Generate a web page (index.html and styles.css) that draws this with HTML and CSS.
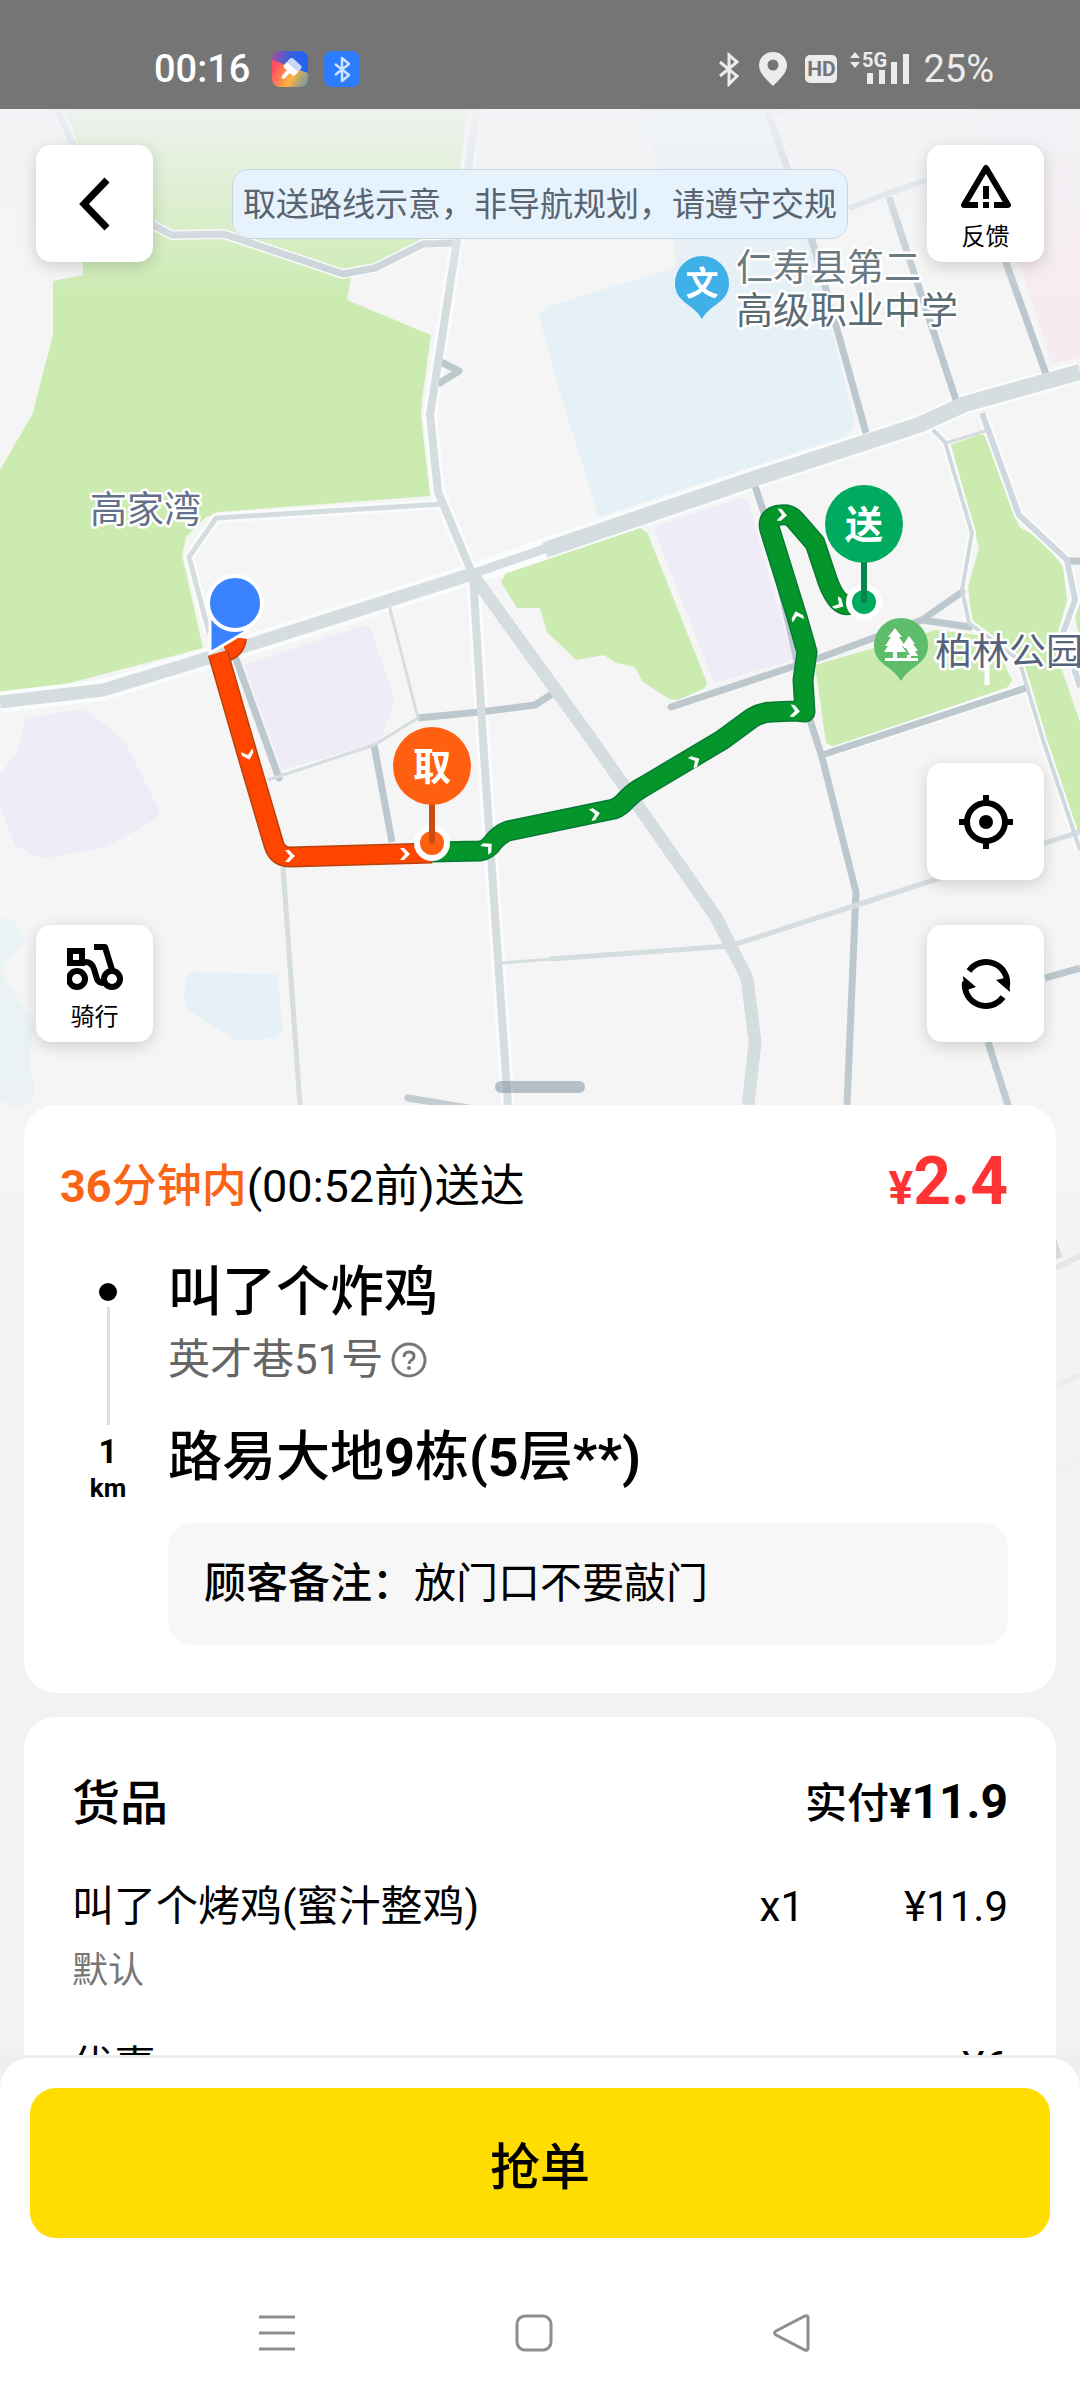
FILE: index.html
```html
<!DOCTYPE html>
<html lang="zh-CN">
<head>
    <meta charset="UTF-8">
    <meta name="viewport" content="width=device-width, initial-scale=1.0">
    <title>抢单</title>
    <link rel="stylesheet" href="styles.css">
</head>
<body>

<div class="screen">

    <header class="status-bar">
        <div class="status-left">
            <span class="status-time">00:16</span>
            <svg class="app-icon" viewBox="0 0 36 36">
                <defs>
                    <linearGradient id="brush-a" x1="0" y1="0.1" x2="1" y2="0.2">
                        <stop offset="0" stop-color="#a0509c"/>
                        <stop offset="0.5" stop-color="#3a5fe0"/>
                        <stop offset="1" stop-color="#2063f2"/>
                    </linearGradient>
                    <linearGradient id="brush-b" x1="0" y1="0.4" x2="0.9" y2="0.8">
                        <stop offset="0" stop-color="#ff4d62"/>
                        <stop offset="0.6" stop-color="#ffb43c"/>
                        <stop offset="1" stop-color="#8b9c90"/>
                    </linearGradient>
                    <clipPath id="brush-clip"><rect width="36" height="36" rx="8"/></clipPath>
                </defs>
                <g clip-path="url(#brush-clip)">
                    <rect width="36" height="36" fill="url(#brush-a)"/>
                    <path d="M0 9 L36 22 V36 H0 Z" fill="url(#brush-b)"/>
                </g>
                <g transform="rotate(42 18 18)">
                    <rect x="11" y="8" width="15" height="8" rx="3" fill="#c9d6fb"/>
                    <path d="M11 15 h15 v4 q0 2 -2 2 h-3.500 v7 q0 2 -2 2 t-2 -2 v-7 H13 q-2 0 -2 -2 Z" fill="#fff"/>
                </g>
            </svg>
            <svg class="app-icon" viewBox="0 0 36 36">
                <rect width="36" height="36" rx="8" fill="#2b7cff"/>
                <path d="M11 13 L25 24 L18 30 V7 L25 13 L11 24" fill="none" stroke="#cfe2ff" stroke-width="2.500" stroke-linejoin="round"/>
            </svg>
        </div>
        <div class="status-right">
            <svg class="status-icon" width="24" height="36" viewBox="0 0 24 36">
                <path d="M3 11 L20 25 L12 33 V4 L20 11 L3 25" fill="none" stroke="#ececec" stroke-width="3"/>
            </svg>
            <svg class="status-icon" width="28" height="36" viewBox="0 0 28 36">
                <path fill="#ececec" fill-rule="evenodd" d="M14 1 C6 1 0 7 0 14.500 C0 22 8 29 14 35 C20 29 28 22 28 14.500 C28 7 22 1 14 1 Z M14 8.500 a5.500 5.500 0 1 1 0 11 a5.500 5.500 0 1 1 0 -11 Z"/>
            </svg>
            <span class="hd-badge">HD</span>
            <svg class="signal" width="62" height="36" viewBox="0 0 62 36">
                <g fill="#ececec">
                    <path d="M1 7 L6 1 L11 7 Z M1 11 H11 L6 17 Z"/>
                    <text class="signal-text" x="13" y="16">5G</text>
                    <rect x="18" y="22" width="6" height="11"/>
                    <rect x="30" y="19" width="6" height="14"/>
                    <rect x="42" y="11" width="6" height="22"/>
                    <rect x="54" y="3" width="6" height="30"/>
                </g>
            </svg>
            <span class="battery">25%</span>
        </div>
    </header>

    <main class="content">

        <svg class="map" viewBox="0 109 1080 1391">
            <defs>
                <linearGradient id="fade-top" x1="0" y1="0" x2="0" y2="1">
                    <stop offset="0" stop-color="#f2f3f6" stop-opacity="0.9"/>
                    <stop offset="1" stop-color="#f2f3f6" stop-opacity="0"/>
                </linearGradient>
                <linearGradient id="fade-bottom" x1="0" y1="0" x2="0" y2="1">
                    <stop offset="0" stop-color="#f2f2f2" stop-opacity="0"/>
                    <stop offset="1" stop-color="#f2f2f2" stop-opacity="1"/>
                </linearGradient>
                <path id="chevron" d="M-5 -6 H-1 L5 0 L-1 6 H-5 L0 0 Z" fill="#fff"/>
            </defs>
            <rect x="0" y="109" width="1080" height="1391" fill="#f5f5f5"/>

            <!-- parks -->
            <g fill="#cbebb0">
                <path d="M66 109 L78 145 L83 275 L53 281 V335 L36 400 L33 413 L0 470 V695 L43 690 L203 648 L182 555 L186 537 L205 518 L218 512 L430 496 L421 415 L422 400 L431 335 L347 300 L351 277 L378 262 L420 240 L452 236 L467 109 Z"/>
                <path d="M506 573 L540 562 L640 528 L647 532 L707 683 L705 688 L678 700 L669 699 L643 682 L635 667 L616 663 L604 655 L576 660 L547 632 L540 608 H517 L501 582 Z"/>
                <path d="M815 665 L936 630 L977 635 L1001 657 L1012 680 L1008 687 L834 747 L826 743 Z"/>
                <path d="M951 445 L977 435 Q985 433 988 440 L1019 527 L1043 540 L1063 567 L1067 600 L1058 633 L1056 653 L1080 722 V840 L1067 807 L1053 760 L1026 687 L1019 665 L994 640 L972 620 L968 587 L979 548 Z"/>
                <path d="M1080 603 L1075 617 L1080 640 Z"/>
            </g>

            <!-- building areas -->
            <g fill="#efecf7">
                <path d="M244 665 L365 625 L370 627 L395 700 L382 737 L380 742 L282 770 Z"/>
                <path d="M26 718 L81 709 L90 713 L124 740 L160 811 L157 818 L107 847 L41 859 L15 846 L0 807 V775 L18 750 Z"/>
                <path d="M654 530 L660 524 L743 497 L748 500 L793 660 L714 683 Z"/>
            </g>
            <g fill="#e5f0f7">
                <path d="M643 109 H760 L809 237 L854 420 Q855 432 840 438 L599 517 L562 400 L540 320 Q538 310 550 306 L676 267 L674 237 Z"/>
                <path d="M193 972 L277 974 L283 1032 L275 1038 L238 1041 L188 1010 L184 1000 L186 977 Z"/>
                <path d="M0 918 L14 920 L26 940 L5 963 L4 978 L34 1023 L29 1065 L35 1090 L32 1102 L17 1109 L0 1100 Z" opacity="0.6"/>
            </g>
            <path d="M975 109 L1019 263 L1050 360 L1055 363 L1080 358 V109 Z" fill="#f6ebf1"/>

            <!-- roads: light outline first, fill second -->
            <g fill="none" stroke="#fbfcfc" stroke-linejoin="round">
                <path d="M477 109 L457 240 L430 415 L438 492 L472 573" stroke-width="14"/>
                <path d="M57 109 L73 145 M153 225 L172 235 L224 234 L343 274 L375 268 L423 244 L455 243" stroke-width="10"/>
                <path d="M0 702 L103 690 L205 659 L472 574 L547 548 L753 479 L919 425 L965 404 L1080 372" stroke-width="21"/>
                <path d="M472 574 L592 740 L716 917 L747 978 L755 1042 L748 1105 M473 575 L483 740 L508 1105" stroke-width="14"/>
                <path d="M442 504 L216 518 L189 557 L209 633 M982 413 L1019 515 L1067 560 L1075 600 L1063 633 L1080 687 M822 755 L1026 688" stroke-width="10"/>
                <path d="M933 430 L945 442 L972 533 L962 590 L969 623 L1019 660 L1043 740 L1080 850" stroke-width="8"/>
            </g>
            <g fill="none" stroke="#bdc8ce" stroke-width="7" stroke-linejoin="round">
                <path d="M441 362 L459 371 L438 384"/>
                <path d="M767 109 L815 250 L866 433 M889 197 L957 403 M1005 260 L1046 374"/>
                <path d="M755 486 L764 513 L810 720 L822 757 L856 892 L847 1105"/>
                <path d="M671 707 L822 657 L922 620 L962 592 M922 620 L970 627 M822 755 L1026 688" stroke-linecap="round"/>
                <path d="M418 718 L480 712 L535 705 L552 694 M374 745 L392 842"/>
                <path d="M236 659 L279 778 M408 1098 L480 1110" stroke-linecap="round"/>
                <path d="M988 1042 L1008 1105 L1059 1258 M1045 978 L1080 968 M1067 561 H1080"/>
            </g>
            <g fill="none" stroke="#d5dde1" stroke-linejoin="round">
                <path d="M57 109 L73 145" stroke="#c5ced6" stroke-width="7"/>
                <path d="M153 225 L172 235 L224 234 L343 274 L375 268 L423 244 L455 243" stroke="#c6d0d6" stroke-width="7"/>
                <path d="M477 109 L457 240 L430 415 L438 492 L472 573" stroke-width="8"/>
                <path d="M0 702 L103 690 L205 659 L472 574" stroke-width="13"/>
                <path d="M472 574 L550 547" stroke-width="9"/>
                <path d="M545 550 L753 479 L919 425 L965 404 L1080 372" stroke-width="16"/>
                <path d="M472 574 L592 740 L716 917 L747 978 L755 1042 L748 1105" stroke-width="13"/>
                <path d="M473 575 L483 740 L508 1105" stroke-width="8"/>
                <path d="M442 504 L216 518 L189 557 L209 633 M283 867 L300 1105" stroke-width="5"/>
                <path d="M389 605 L418 718 L374 745 L268 780 M946 443 L988 430 M502 963 L552 959 M769 117 L795 109" stroke-width="3"/>
                <path d="M550 959 L730 946 L857 905 L940 878 L1045 843 L1080 832" stroke-width="5"/>
                <path d="M849 208 L889 193 L927 180" stroke-width="6"/>
                <path d="M982 413 L1019 515 L1067 560 L1075 600 L1063 633 L1080 687" stroke="#d0d8df" stroke-width="6"/>
                <path d="M933 430 L945 442 L972 533 L962 590 L969 623 L1019 660 L1043 740 L1080 850" stroke="#d0d8df" stroke-width="4"/>
                <path d="M1056 1268 L1080 1256 M1056 1387 L1080 1375 M1056 1472 L1080 1460 M1056 1487 L1080 1540" stroke-width="6"/>
            </g>
            <path d="M987 663 V685" stroke="#fff" stroke-width="5"/>

            <rect x="0" y="109" width="1080" height="190" fill="url(#fade-top)"/>
            <rect x="0" y="1060" width="1080" height="440" fill="url(#fade-bottom)"/>

            <!-- places -->
            <g class="place">
                <text x="90" y="523" fill="#65718c">高家湾</text>
                <text x="736" y="281" fill="#6a7a80">仁寿县第二</text>
                <text x="736" y="324" fill="#5b6b72">高级职业中学</text>
                <text x="935" y="665" fill="#56637a">柏林公园</text>
            </g>
            <path d="M702 256 a27 27 0 0 1 27 27 c0 20 -18 20 -27 36 c-9 -16 -27 -16 -27 -36 a27 27 0 0 1 27 -27 Z" fill="#3fb0e8"/>
            <text class="pin-text" x="702" y="295" font-size="33">文</text>
            <path d="M901 618 a27 27 0 0 1 27 27 c0 20 -18 20 -27 36 c-9 -16 -27 -16 -27 -36 a27 27 0 0 1 27 -27 Z" fill="#5dbd6b"/>
            <path d="M895 628 l7 9 h-3 l6 9 h-3 l4 6 h-9 v6 h-4 v-6 h-9 l4 -6 h-3 l6 -9 h-3 Z M909 636 l6 8 h-2 l5 7 h-3 l3 5 h-7 v3 h-4 v-4 h3 l-4 -7 h-2 l-1 -3 Z M885 658 h33 v3 h-33 Z" fill="#fff"/>

            <!-- route -->
            <g fill="none" stroke-linejoin="round">
                <path d="M237 638 Q236 648 226 652" stroke="#b8420a" stroke-width="20"/>
                <path d="M237 638 Q236 648 226 652" stroke="#ff4500" stroke-width="17"/>
                <path d="M432 852 L480 851 Q488 850 494 841 Q500 834 508 831 L614 809 Q620 807 627 799 Q635 791 643 787 L722 740 L752 718 Q762 712 772 712 L795 711 L805 712 L803 680 L807 652 L797 617 L770 530 Q766 516 781 515 Q790 514 795 520 L815 543 L828 582 Q838 608 850 604 L864 600" stroke="#067a35" stroke-width="21"/>
                <path d="M432 852 L480 851 Q488 850 494 841 Q500 834 508 831 L614 809 Q620 807 627 799 Q635 791 643 787 L722 740 L752 718 Q762 712 772 712 L795 711 L805 712 L803 680 L807 652 L797 617 L770 530 Q766 516 781 515 Q790 514 795 520 L815 543 L828 582 Q838 608 850 604 L864 600" stroke="#04962a" stroke-width="18"/>
                <path d="M218 653 L249 760 L274 845 Q278 857 290 857 L432 853" stroke="#b8420a" stroke-width="21"/>
                <path d="M218 653 L249 760 L274 845 Q278 857 290 857 L432 853" stroke="#ff4500" stroke-width="18"/>
            </g>
            <use href="#chevron" transform="translate(248 755) rotate(73)"/>
            <use href="#chevron" transform="translate(290 856)"/>
            <use href="#chevron" transform="translate(405 854)"/>
            <use href="#chevron" transform="translate(488 847) rotate(-42)"/>
            <use href="#chevron" transform="translate(595 814) rotate(-12)"/>
            <use href="#chevron" transform="translate(695 761) rotate(-28)"/>
            <use href="#chevron" transform="translate(795 711) rotate(5)"/>
            <use href="#chevron" transform="translate(797 616) rotate(-107)"/>
            <use href="#chevron" transform="translate(782 515) rotate(5)"/>
            <use href="#chevron" transform="translate(839 604) rotate(30)"/>

            <!-- pickup pin -->
            <circle cx="432" cy="843" r="18" fill="#fff"/>
            <circle cx="432" cy="843" r="12" fill="#ff5f10"/>
            <path d="M432 800 V841" stroke="#cb4c10" stroke-width="6" stroke-linecap="round"/>
            <circle cx="432" cy="766" r="39" fill="#ff5f10"/>
            <text class="pin-text" x="432" y="780" font-size="38">取</text>

            <!-- delivery pin -->
            <circle cx="864" cy="602" r="18" fill="#fff"/>
            <circle cx="864" cy="602" r="12" fill="#00ab5f"/>
            <path d="M864 560 V600" stroke="#07864c" stroke-width="6" stroke-linecap="round"/>
            <circle cx="864" cy="524" r="39" fill="#00ab5f"/>
            <text class="pin-text" x="864" y="538" font-size="38">送</text>

            <!-- rider -->
            <path d="M210 617 V653 L247 631 Z" fill="#3b82ff" stroke="#fff" stroke-width="3" stroke-linejoin="round"/>
            <circle cx="235" cy="603" r="27" fill="#3b82ff" stroke="#fff" stroke-width="4"/>
        </svg>

        <section class="map-area">
            <div class="map-top">
                <button class="map-button" aria-label="返回">
                    <svg width="54" height="54" viewBox="0 0 54 54"><path d="M39 3 L16 27 L39 51" fill="none" stroke="#000" stroke-width="7"/></svg>
                </button>
                <p class="banner">取送路线示意，非导航规划，请遵守交规</p>
                <button class="map-button with-label">
                    <svg width="52" height="52" viewBox="0 0 52 52">
                        <path d="M18 44 H4 L26 7 L48 44 H34" fill="none" stroke="#000" stroke-width="6" stroke-linejoin="round"/>
                        <path d="M23 25 h6 v13 h-6 Z M23 41 h6 v6 h-6 Z"/>
                    </svg>
                    <span>反馈</span>
                </button>
            </div>
            <div class="map-bottom">
                <button class="map-button with-label">
                    <svg width="56" height="52" viewBox="0 0 56 52">
                        <g fill="none" stroke="#000" stroke-width="6">
                            <rect x="3" y="10" width="12" height="12"/>
                            <circle cx="10" cy="38" r="8"/>
                            <circle cx="45" cy="38" r="8"/>
                            <path d="M14 21 H18 Q25 21 27 28 L30 38 Q31 42 38 42 M27 6 H38 L46 32" stroke-linejoin="round"/>
                        </g>
                    </svg>
                    <span>骑行</span>
                </button>
                <div class="map-actions">
                    <button class="map-button" aria-label="定位">
                        <svg width="54" height="54" viewBox="0 0 54 54">
                            <circle cx="27" cy="27" r="19" fill="none" stroke="#000" stroke-width="6"/>
                            <circle cx="27" cy="27" r="7"/>
                            <path d="M27 0 V8 M27 46 V54 M0 27 H8 M46 27 H54" stroke="#000" stroke-width="6"/>
                        </svg>
                    </button>
                    <button class="map-button" aria-label="刷新">
                        <svg width="54" height="54" viewBox="0 0 54 54">
                            <path d="M10 14 A21 21 0 0 1 48 29 M44 40 A21 21 0 0 1 6 25" fill="none" stroke="#000" stroke-width="6"/>
                            <path d="M37 23 L50 20 L51 35 Z M4 19 L17 30 L5 34 Z"/>
                        </svg>
                    </button>
                </div>
            </div>
            <div class="handle"></div>
        </section>

        <section class="card order-card">
            <div class="order-head">
                <p class="deadline"><span class="time-left"><b>36</b>分钟内</span>(00:52前)送达</p>
                <p class="fee"><small>¥</small>2.4</p>
            </div>
            <div class="route">
                <div class="route-line">
                    <i class="dot"></i>
                    <i class="line"></i>
                    <b class="distance">1</b>
                    <b class="unit">km</b>
                </div>
                <div class="route-detail">
                    <h2>叫了个炸鸡</h2>
                    <p class="address">英才巷51号
                        <svg width="36" height="36" viewBox="0 0 36 36">
                            <g fill="none" stroke="#777" stroke-width="3">
                                <circle cx="18" cy="18" r="16"/>
                                <path d="M13 15 Q13 10 18 10 T23 14 Q23 17 20 18.500 Q18 20 18 22"/>
                            </g>
                            <circle cx="18" cy="26" r="2" fill="#777"/>
                        </svg>
                    </p>
                    <h2>路易大地<b>9</b>栋<b>(5</b>层<b>**)</b></h2>
                    <p class="note"><b>顾客备注：</b>放门口不要敲门</p>
                </div>
            </div>
        </section>

        <section class="card goods-card">
            <div class="goods-head">
                <h3>货品</h3>
                <p class="paid">实付<b>¥<big>11.9</big></b></p>
            </div>
            <table class="goods">
                <tr>
                    <td>叫了个烤鸡(蜜汁整鸡)</td>
                    <td class="count">x1</td>
                    <td class="price">¥11.9</td>
                </tr>
                <tr class="spec">
                    <td colspan="3">默认</td>
                </tr>
                <tr class="discount">
                    <td colspan="2">优惠</td>
                    <td class="price">¥6</td>
                </tr>
            </table>
        </section>

    </main>

    <footer class="bottom">
        <div class="sheet">
            <button class="grab">抢单</button>
            <nav class="system-nav">
                <button aria-label="最近任务">
                    <svg width="38" height="38" viewBox="0 0 38 38"><path d="M1 3 H37 M1 19 H37 M1 35 H37"/></svg>
                </button>
                <button aria-label="主屏幕">
                    <svg width="38" height="38" viewBox="0 0 38 38"><rect x="2" y="2" width="34" height="34" rx="8"/></svg>
                </button>
                <button aria-label="返回上一页">
                    <svg width="38" height="38" viewBox="0 0 38 38"><path d="M33 2 Q36 1 36 4 V34 Q36 37 33 36 L4 21 Q1 19 4 17 Z"/></svg>
                </button>
            </nav>
        </div>
    </footer>

</div>

</body>
</html>
```

FILE: styles.css
```css
* {
    box-sizing: border-box;
}
body {
    margin: 0;
    font-family: Roboto, "Noto Sans CJK SC", sans-serif;
    color: #000;
    background-color: #f2f2f2;
}
p, h2, h3 {
    margin: 0;
}
button {
    padding: 0;
    border: none;
    font-family: inherit;
    color: #000;
    cursor: pointer;
}
svg {
    display: block;
}
.screen {
    display: flex;
    flex-direction: column;
    height: 100vh;
    overflow: hidden;
}

/* status bar */
.status-bar {
    display: flex;
    justify-content: space-between;
    flex-shrink: 0;
    height: 109px;
    padding: 48px 86px 18px 154px;
    background-color: #757575;
}
.status-left, .status-right {
    display: flex;
    align-items: center;
    height: 42px;
}
.status-left {
    gap: 16px;
}
.status-time {
    margin-right: 6px;
    font-size: 38px;
    font-weight: 500;
    color: #fff;
}
.app-icon {
    width: 36px;
    height: 36px;
}
.status-right {
    gap: 12px;
    color: #ececec;
}
.status-icon {
    margin-right: 6px;
}
.hd-badge {
    width: 32px;
    height: 28px;
    border-radius: 5px;
    font-size: 21px;
    font-weight: 700;
    line-height: 28px;
    text-align: center;
    color: #757575;
    background-color: #ececec;
}
.signal {
    overflow: visible;
}
.signal-text {
    font-size: 20px;
    font-weight: 700;
}
.battery {
    font-size: 38px;
}

/* map */
.content {
    position: relative;
    flex: 1;
    min-height: 0;
    overflow: hidden;
}
.map {
    position: absolute;
    top: 0;
    left: 0;
    width: 100%;
    height: auto;
}
.place text {
    font-size: 37px;
    stroke: #fff;
    stroke-width: 5px;
    stroke-linejoin: round;
    paint-order: stroke;
}
.pin-text {
    fill: #fff;
    font-weight: 700;
    text-anchor: middle;
}
.map-area {
    position: relative;
    display: flex;
    flex-direction: column;
    height: 996px;
    padding: 36px 36px 12px;
}
.map-top {
    display: flex;
    align-items: center;
    justify-content: space-between;
}
.map-bottom {
    display: flex;
    align-items: flex-end;
    justify-content: space-between;
    margin-top: auto;
}
.map-actions {
    display: flex;
    flex-direction: column;
    gap: 45px;
}
.map-button {
    display: flex;
    flex-direction: column;
    align-items: center;
    justify-content: center;
    width: 117px;
    height: 117px;
    border-radius: 15px;
    background-color: #fff;
    box-shadow: 0 4px 16px rgba(0, 0, 0, 0.16);
}
.with-label {
    justify-content: flex-end;
    gap: 8px;
    padding-bottom: 9px;
    font-size: 24px;
    line-height: 32px;
}
.banner {
    height: 70px;
    padding: 0 10px;
    border: 1px solid #c9d6e2;
    border-radius: 17px;
    font-size: 33px;
    line-height: 70px;
    color: #5a6470;
    background-color: #e6f3fd;
}
.handle {
    align-self: center;
    width: 90px;
    height: 12px;
    margin-top: 39px;
    border-radius: 6px;
    background-color: rgba(128, 145, 160, 0.55);
}

/* cards */
.card {
    position: relative;
    margin: 0 24px 24px;
    border-radius: 32px;
    background-color: #fff;
}
.order-card {
    padding: 48px 48px 48px 36px;
}
.order-head {
    display: flex;
    align-items: center;
    justify-content: space-between;
    height: 64px;
}
.deadline {
    padding-bottom: 6px;
    font-size: 45px;
}
.time-left {
    font-weight: 500;
    color: #fa6414;
}
.fee {
    font-size: 66px;
    font-weight: 700;
    line-height: 64px;
    color: #ff3333;
}
.fee small {
    font-size: 46px;
}
.route {
    display: flex;
    margin-top: 36px;
}
.route-line {
    display: flex;
    flex-direction: column;
    align-items: center;
    width: 96px;
    margin-right: 12px;
    padding-top: 30px;
}
.dot {
    width: 18px;
    height: 18px;
    border-radius: 50%;
    background-color: #000;
}
.line {
    width: 3px;
    height: 118px;
    margin: 6px 0 9px;
    background-color: #ddd;
}
.distance {
    font-size: 33px;
    line-height: 36px;
}
.unit {
    font-size: 26px;
    line-height: 36px;
}
.route-detail {
    flex: 1;
    padding-top: 4px;
}
h2 {
    font-size: 54px;
    font-weight: 500;
    line-height: 72px;
}
.address {
    display: flex;
    align-items: center;
    gap: 8px;
    margin-bottom: 31px;
    font-size: 42px;
    line-height: 62px;
    color: #666;
}
.note {
    margin-top: 29px;
    padding: 29px 36px;
    border-radius: 24px;
    font-size: 42px;
    line-height: 64px;
    background-color: #f7f7f7;
}
.note b {
    font-weight: 500;
}
.goods-card {
    padding: 48px;
}
.goods-head {
    display: flex;
    align-items: center;
    justify-content: space-between;
    height: 68px;
}
h3 {
    font-size: 48px;
    font-weight: 500;
}
.paid {
    font-size: 42px;
    font-weight: 500;
}
.paid big {
    font-size: 48px;
}
.goods {
    width: 100%;
    margin-top: 42px;
    border-collapse: collapse;
    font-size: 42px;
    line-height: 64px;
}
.goods td {
    padding: 0;
}
.goods .count {
    width: 40px;
}
.goods .price {
    width: 204px;
    text-align: right;
}
.goods .spec td {
    font-size: 36px;
    color: #777;
}
.goods .discount td {
    padding-top: 32px;
}

/* bottom bar */
.bottom {
    flex-shrink: 0;
    padding-top: 3px;
    background-color: #efefef;
}
.sheet {
    padding: 30px 30px 48px;
    border-radius: 30px 30px 0 0;
    background-color: #fff;
}
.grab {
    width: 100%;
    height: 150px;
    border-radius: 26px;
    font-size: 50px;
    font-weight: 500;
    background-color: #ffdd00;
}
.system-nav {
    display: flex;
    justify-content: space-between;
    padding: 76px 240px 0 228px;
}
.system-nav button {
    background: none;
}
.system-nav svg {
    fill: none;
    stroke: #8e8e8e;
    stroke-width: 3px;
}
```
